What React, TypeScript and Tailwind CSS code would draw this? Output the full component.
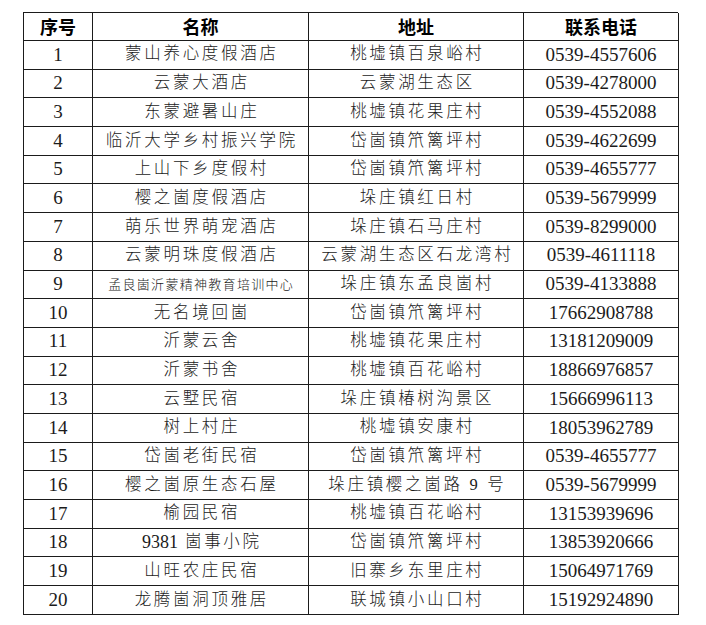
import React from 'react';

type Row = { no: number; name: React.ReactNode; addr: string; phone: string; small?: boolean };

const rows: Row[] = [
  { no: 1, name: '蒙山养心度假酒店', addr: '桃墟镇百泉峪村', phone: '0539-4557606' },
  { no: 2, name: '云蒙大酒店', addr: '云蒙湖生态区', phone: '0539-4278000' },
  { no: 3, name: '东蒙避暑山庄', addr: '桃墟镇花果庄村', phone: '0539-4552088' },
  { no: 4, name: '临沂大学乡村振兴学院', addr: '岱崮镇笊篱坪村', phone: '0539-4622699' },
  { no: 5, name: '上山下乡度假村', addr: '岱崮镇笊篱坪村', phone: '0539-4655777' },
  { no: 6, name: '樱之崮度假酒店', addr: '垛庄镇红日村', phone: '0539-5679999' },
  { no: 7, name: '萌乐世界萌宠酒店', addr: '垛庄镇石马庄村', phone: '0539-8299000' },
  { no: 8, name: '云蒙明珠度假酒店', addr: '云蒙湖生态区石龙湾村', phone: '0539-4611118' },
  { no: 9, name: '孟良崮沂蒙精神教育培训中心', addr: '垛庄镇东孟良崮村', phone: '0539-4133888', small: true },
  { no: 10, name: '无名境回崮', addr: '岱崮镇笊篱坪村', phone: '17662908788' },
  { no: 11, name: '沂蒙云舍', addr: '桃墟镇花果庄村', phone: '13181209009' },
  { no: 12, name: '沂蒙书舍', addr: '桃墟镇百花峪村', phone: '18866976857' },
  { no: 13, name: '云墅民宿', addr: '垛庄镇椿树沟景区', phone: '15666996113' },
  { no: 14, name: '树上村庄', addr: '桃墟镇安康村', phone: '18053962789' },
  { no: 15, name: '岱崮老街民宿', addr: '岱崮镇笊篱坪村', phone: '0539-4655777' },
  { no: 16, name: '樱之崮原生态石屋', addr: '垛庄镇樱之崮路 9 号', phone: '0539-5679999' },
  { no: 17, name: '榆园民宿', addr: '桃墟镇百花峪村', phone: '13153939696' },
  {
    no: 18,
    name: (
      <>
        <span className="tracking-normal text-[18px] font-normal mr-[7px]">9381</span>崮事小院
      </>
    ),
    addr: '岱崮镇笊篱坪村',
    phone: '13853920666',
  },
  { no: 19, name: '山旺农庄民宿', addr: '旧寨乡东里庄村', phone: '15064971769' },
  { no: 20, name: '龙腾崮洞顶雅居', addr: '联城镇小山口村', phone: '15192924890' },
];

const serif = "font-['Liberation_Serif','Noto_Sans_CJK_SC',serif]";
const cell = 'h-[28.7px] border-r border-b border-[#1b1b1b] flex items-center justify-center';

export default function App() {
  return (
    <div className="w-[706px] h-[625px] bg-white overflow-hidden">
      <div className="ml-[23px] mt-[12px] w-[655px] border-l border-t border-[#1b1b1b] grid grid-cols-[69px_216px_215px_155px] text-[#1b1b1b]">
        {['序号', '名称', '地址', '联系电话'].map((h) => (
          <div
            key={h}
            className="h-[28px] border-r border-b border-[#1b1b1b] flex items-center justify-center font-['Noto_Sans_CJK_SC',sans-serif] font-bold text-[18px] text-black"
          >
            {h}
          </div>
        ))}
        {rows.map((r) => (
          <React.Fragment key={r.no}>
            <div className={`${cell} ${serif} text-[19px]`}>{r.no}</div>
            <div
              className={`${cell} ${serif} font-light ${
                r.small ? 'text-[13px] tracking-[1.3px] pl-[1.3px]' : 'text-[16.5px] tracking-[2.7px] pl-[2.7px]'
              }`}
            >
              {r.name}
            </div>
            <div className={`${cell} ${serif} font-light text-[16.5px] tracking-[2.7px] pl-[2.7px]`}>{r.addr}</div>
            <div className={`${cell} ${serif} text-[19px]`}>{r.phone}</div>
          </React.Fragment>
        ))}
      </div>
    </div>
  );
}
